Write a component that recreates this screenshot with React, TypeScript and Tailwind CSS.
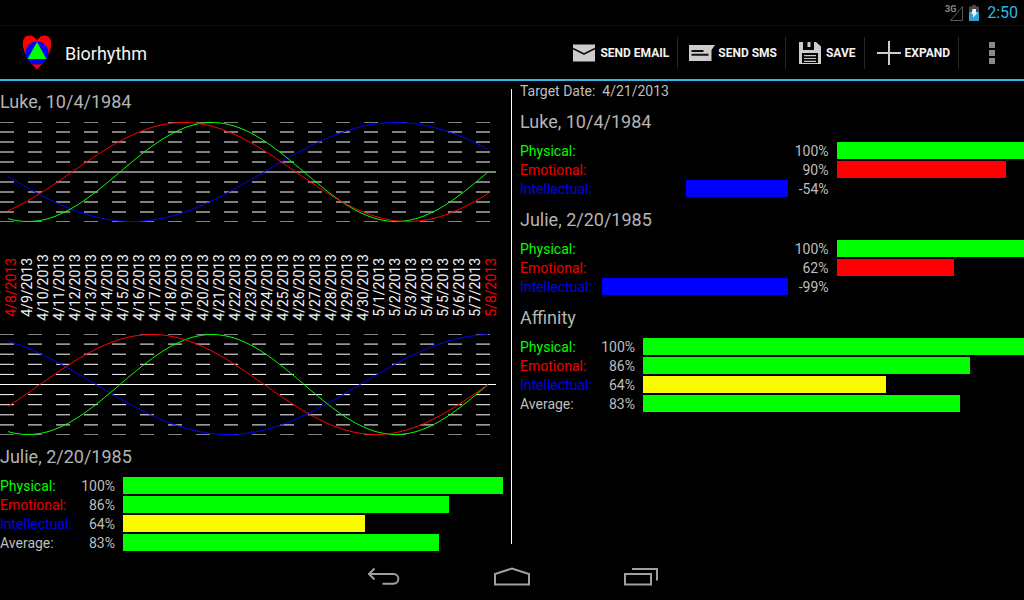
import React from 'react';

type Phase = { period: number; offset: number; color: string };
type Row = { label: string; tone: string; text: string; value: number; bar: string };

const DAYS = 31;

const luke: Phase[] = [
  { period: 33, offset: 17, color: '#0000ff' },
  { period: 23, offset: 16, color: '#00ff00' },
  { period: 28, offset: 24, color: '#ff0000' },
];
const julie: Phase[] = [
  { period: 33, offset: 11, color: '#0000ff' },
  { period: 23, offset: 16, color: '#00ff00' },
  { period: 28, offset: 26, color: '#ff0000' },
];

const affinity: Row[] = [
  { label: 'Physical:', tone: 'text-[#00ff00]', text: '100%', value: 100, bar: 'bg-[#00ff00]' },
  { label: 'Emotional:', tone: 'text-[#f00000]', text: '86%', value: 85.8, bar: 'bg-[#00ff00]' },
  { label: 'Intellectual:', tone: 'text-[#0000f0]', text: '64%', value: 63.8, bar: 'bg-[#fbfb00]' },
  { label: 'Average:', tone: 'text-[#bebebe]', text: '83%', value: 83.2, bar: 'bg-[#00ff00]' },
];

const person = (emotional: number, emotionalText: string, intellectual: number, intellectualText: string): Row[] => [
  { label: 'Physical:', tone: 'text-[#00ff00]', text: '100%', value: 100, bar: 'bg-[#00ff00]' },
  { label: 'Emotional:', tone: 'text-[#f00000]', text: emotionalText, value: emotional, bar: 'bg-[#ff0000]' },
  { label: 'Intellectual:', tone: 'text-[#0000f0]', text: intellectualText, value: intellectual, bar: 'bg-[#0000ff]' },
];

const dates = Array.from({ length: DAYS }, (_, i) => (i < 23 ? `4/${8 + i}/2013` : `5/${i - 22}/2013`));

function Chart({ phases, height, label }: { phases: Phase[]; height: number; label: string }) {
  const mid = height / 2;
  const points = (p: Phase) =>
    Array.from({ length: (DAYS - 1) * 4 + 1 }, (_, i) => {
      const day = i / 4;
      const y = mid - (mid - 0.5) * Math.sin((2 * Math.PI * (p.offset + day)) / p.period);
      return `${8 + day * 16},${y.toFixed(2)}`;
    }).join(' ');
  return (
    <svg
      role="img"
      aria-label={label}
      className="block w-full overflow-hidden"
      height={height}
      viewBox={`0 0 503 ${height}`}
      preserveAspectRatio="none"
    >
      {Array.from({ length: 11 }, (_, i) => {
        const y = (height / 10) * i;
        return i === 5 ? (
          <line key={i} x1="0" x2="496" y1={y} y2={y} stroke="#fff" />
        ) : (
          <line key={i} x1="0" x2="490" y1={y} y2={y} stroke="#fff" strokeDasharray="14 14" />
        );
      })}
      {phases.map((p) => (
        <polyline key={p.period} points={points(p)} fill="none" stroke={p.color} strokeWidth="1" />
      ))}
    </svg>
  );
}

function Title({ children }: { children: React.ReactNode }) {
  return <h2 className="flex h-[41px] items-center pt-px text-lg text-[#b4b4b4]">{children}</h2>;
}

function AffinityBars() {
  return (
    <div className="flex flex-col gap-0.5">
      {affinity.map((r) => (
        <div key={r.label} className="flex h-[17px] items-center gap-2">
          <div className="flex w-[115px] items-center justify-between">
            <span className={r.tone}>{r.label}</span>
            <span>{r.text}</span>
          </div>
          <div className="h-full flex-1">
            <div className={`h-full ${r.bar}`} style={{ width: `${r.value}%` }} />
          </div>
        </div>
      ))}
    </div>
  );
}

function PersonBars({ rows }: { rows: Row[] }) {
  return (
    <div className="flex flex-col gap-0.5">
      {rows.map((r) => (
        <div key={r.label} className="flex h-[17px] items-center">
          <span className={`w-20 ${r.tone}`}>{r.label}</span>
          <div className="flex h-full flex-1 justify-end">
            {r.value < 0 && <div className={`h-full ${r.bar}`} style={{ width: `${-r.value}%` }} />}
          </div>
          <span className="w-[49px] pr-2 text-right">{r.text}</span>
          <div className="h-full flex-1">
            {r.value > 0 && <div className={`h-full ${r.bar}`} style={{ width: `${r.value}%` }} />}
          </div>
        </div>
      ))}
    </div>
  );
}

function Action({ label, children }: { label: string; children: React.ReactNode }) {
  return (
    <button type="button" className="flex h-8 items-center border-r border-[#262626] px-2 text-xs font-bold text-[#f3f3f3]">
      <svg width="32" height="32" viewBox="0 0 32 32" aria-hidden="true">
        {children}
      </svg>
      {label}
    </button>
  );
}

function NavButton({ label, children }: { label: string; children: React.ReactNode }) {
  return (
    <button type="button" aria-label={label} className="flex h-12 w-32 items-center justify-center pt-0.5">
      <svg width="40" height="24" viewBox="0 0 40 24" fill="none" stroke="#a0a0a0" strokeWidth="2" aria-hidden="true">
        {children}
      </svg>
    </button>
  );
}

export default function App() {
  return (
    <div className="flex min-h-screen flex-col bg-black font-['Roboto',sans-serif] text-sm text-[#bebebe]">
      <div className="flex h-[25px] items-center justify-end pr-1.5">
        <svg width="20" height="18" viewBox="0 0 20 18" aria-hidden="true">
          <text x="0" y="8" fontSize="9" fontWeight="700" fill="#8a8a8a" fontFamily="Roboto, sans-serif">3G</text>
          <path d="M5.5 16.5 L17.5 2.5 V16.5 Z" fill="none" stroke="#5a5a5a" />
        </svg>
        <svg className="ml-1" width="10" height="16" viewBox="0 0 10 16" aria-hidden="true">
          <path d="M3 0h4v1.5h3V7H0V1.5h3z" fill="#4a4a4a" />
          <path d="M0 7h10v9H0z" fill="#2fa3cf" />
          <path d="M3.500 4h3.500v3.500h1.500L4 13V9H2.300z" fill="#f0f0f0" />
        </svg>
        <span className="ml-2 text-base text-[#33b5e5]">2:50</span>
      </div>

      <header className="flex h-14 items-center border-t border-b-2 border-t-[#0c0c0c] border-b-[#33b5e5]">
        <svg className="ml-[22px]" width="30" height="36" viewBox="0 0 30 36" aria-hidden="true">
          <path d="M15 5.5C13 1.8 10 .5 7.5 .5 3 .5 .8 4 .8 8.5c0 11 8.2 19 14.2 26.3C21 27.500 29.200 19.500 29.200 8.500 29.200 4 27 .5 22.500 .5 20 .5 17 1.800 15 5.500z" fill="#ff0000" />
          <circle cx="15" cy="18" r="11.500" fill="#0000ff" />
          <path d="M15 7 L24.500 24 H5.500 Z" fill="#00ff00" />
        </svg>
        <h1 className="ml-[13px] flex-1 pt-0.5 text-lg text-[#f3f3f3]">Biorhythm</h1>
        <Action label="SEND EMAIL">
          <path d="M5 7.500h22v17H5z" fill="#ccc" />
          <path d="M5 11.500l11 5.500 11-5.500" fill="none" stroke="#111" strokeWidth="1.600" />
        </Action>
        <Action label="SEND SMS">
          <path d="M3 8h26l-3.500 5v11H3z" fill="#ccc" />
          <path d="M5.500 14h12M5.500 17.700h17" stroke="#111" strokeWidth="2" />
        </Action>
        <Action label="SAVE">
          <path d="M5 5h17l5 4.500V27H5z" fill="#ccc" />
          <path d="M9 5h11v8H9zM8 16h16v10H8z" fill="#050505" />
          <path d="M13.500 5h3v5h-3z" fill="#ccc" />
          <path d="M10 18.700h12M10 21.500h12M10 24.300h12" stroke="#ccc" strokeWidth="1.200" />
        </Action>
        <Action label="EXPAND">
          <path d="M16 4v24M4 16h24" stroke="#ccc" strokeWidth="2" />
        </Action>
        <button type="button" aria-label="More options" className="flex h-8 w-[65px] flex-col items-center justify-center gap-0.5">
          <span className="size-1.5 bg-[#8a8a8a]" />
          <span className="size-1.5 bg-[#8a8a8a]" />
          <span className="size-1.5 bg-[#8a8a8a]" />
        </button>
      </header>

      <main className="flex flex-1">
        <section className="flex w-1/2">
          <div className="flex-1">
            <Title>Luke, 10/4/1984</Title>
            <Chart phases={luke} height={100} label="Luke" />
            <div className="flex h-28 items-center pt-[18px] pr-1 pl-[3px]">
              {dates.map((d, i) => (
                <div key={d} className="flex flex-1 justify-center">
                  <span
                    className={`rotate-180 text-sm leading-4 whitespace-nowrap [writing-mode:vertical-rl] ${
                      i === 0 || i === DAYS - 1 ? 'text-[#f00000]' : 'text-[#f3f3f3]'
                    }`}
                  >
                    {d}
                  </span>
                </div>
              ))}
            </div>
            <Chart phases={julie} height={101} label="Julie" />
            <div className="pt-px">
              <Title>Julie, 2/20/1985</Title>
              <AffinityBars />
            </div>
          </div>
          <div className="my-2 ml-2 w-px bg-white" />
        </section>

        <section className="w-1/2 pl-2">
          <p className="h-5 leading-5 whitespace-pre">Target Date:  4/21/2013</p>
          <div className="flex flex-col gap-0.5">
            <div>
              <Title>Luke, 10/4/1984</Title>
              <PersonBars rows={person(90.4, '90%', -54.3, '-54%')} />
            </div>
            <div>
              <Title>Julie, 2/20/1985</Title>
              <PersonBars rows={person(62.4, '62%', -99, '-99%')} />
            </div>
            <div>
              <Title>Affinity</Title>
              <AffinityBars />
            </div>
          </div>
        </section>
      </main>

      <nav className="flex h-12 justify-center">
        <NavButton label="Back">
          <path d="M10.500 3.500L5 9l5.500 5.500M5 9h24.500a4.800 4.800 0 0 1 0 9.700H18.500" />
        </NavButton>
        <NavButton label="Home">
          <path d="M3 19V9L20 3.500 37 9V19.500H3z" />
        </NavButton>
        <NavButton label="Recent apps">
          <path d="M5 9h26v10.500H5zM12 4h25v11.500" />
        </NavButton>
      </nav>
    </div>
  );
}
